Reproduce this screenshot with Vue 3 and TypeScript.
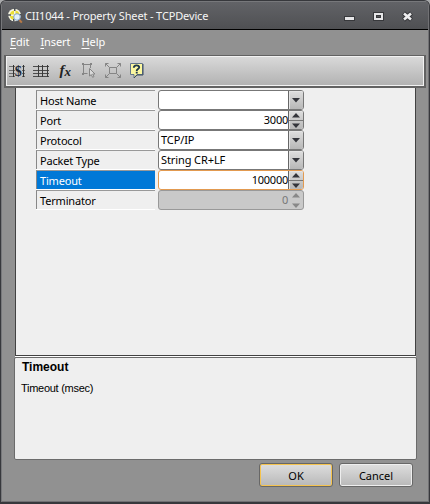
<script setup lang="ts">
interface PropertyRow {
  label: string
  value: string
  kind: 'combo' | 'spin'
  disabled?: boolean
}

const selected = 'Timeout'
const menus = ['Edit', 'Insert', 'Help']
const rows: PropertyRow[] = [
  { label: 'Host Name', value: '', kind: 'combo' },
  { label: 'Port', value: '3000', kind: 'spin' },
  { label: 'Protocol', value: 'TCP/IP', kind: 'combo' },
  { label: 'Packet Type', value: 'String CR+LF', kind: 'combo' },
  { label: 'Timeout', value: '100000', kind: 'spin' },
  { label: 'Terminator', value: '0', kind: 'spin', disabled: true },
]
</script>

<template>
  <div class="window">
    <header class="titlebar">
      <svg class="app-icon" width="16" height="16" viewBox="0 0 16 16">
        <circle cx="7.500" cy="7" r="6.300" fill="#f6f5e4" />
        <path d="M7 2.500A4.800 4.800 0 0 0 2.800 6.500H7zM8.500 2.500V6h4A4.800 4.800 0 0 0 8.500 2.500zM7 8v4a4.800 4.800 0 0 1-4.200-4z" fill="#eadf35" />
        <path d="M7 0h1.500v3H7zM1 6.300h3v1.500H1zM12 6h2.500v1.500H12zM6 11h1.500v2.500H6z" fill="#4c5157" />
        <circle cx="10" cy="9" r="3.300" fill="#e2f1fc" stroke="#86a5c8" stroke-width="1" />
        <path d="M12.500 12l2.300 2.600" stroke="#b87945" stroke-width="2" />
      </svg>
      <span class="title">CII1044 - Property Sheet - TCPDevice</span>
      <svg class="controls" width="72" height="12" viewBox="0 0 72 12" shape-rendering="crispEdges">
        <path d="M0 5h11v5H0z" fill="#38393c" />
        <path d="M1 6h9v3H1z" fill="#e6e6e8" />
        <path d="M29 1h11v9H29z" fill="#38393c" />
        <path d="M30 2h9v7h-9zM32 4v3h5V4z" fill="#e6e6e8" fill-rule="evenodd" />
        <path d="M33 5h3v1h-3z" fill="#55565a" />
        <path d="M59.500 2l8 7M67.500 2l-8 7" stroke="#38393c" stroke-width="4.500" shape-rendering="auto" />
        <path d="M60 2.500l7 6M67 2.500l-7 6" stroke="#eeeef0" stroke-width="2.600" shape-rendering="auto" />
      </svg>
    </header>

    <nav class="menu">
      <span v-for="m in menus" :key="m" class="menu-item"><u>{{ m[0] }}</u>{{ m.slice(1) }}</span>
    </nav>

    <div class="toolbar">
      <svg width="16" height="16" viewBox="0 0 16 16">
        <g shape-rendering="crispEdges">
          <path d="M0 3h16v1H0zM0 7h16v1H0zM0 10h16v1H0zM0 13h16v1H0z" fill="#6c6c6c" />
          <path d="M4 2h1v12H4zM14 2h1v12h-1z" fill="#333" />
          <path d="M6 3h7v11H6z" fill="#c4c4c4" />
        </g>
        <text x="5.800" y="13" class="dollar">$</text>
      </svg>
      <svg width="16" height="16" viewBox="0 0 16 16" shape-rendering="crispEdges">
        <path d="M0 3h16v1H0zM0 7h16v1H0zM0 10h16v1H0zM0 13h16v1H0z" fill="#4c4c4c" />
        <path d="M5 2h1v12H5zM9 2h1v12H9zM14 2h1v12h-1z" fill="#3a3a3a" />
      </svg>
      <svg width="16" height="16" viewBox="0 0 16 16">
        <text x="2.500" y="11.500" class="fx">f</text>
        <text x="7.500" y="13" class="fx small">x</text>
      </svg>
      <svg width="16" height="16" viewBox="0 0 16 16" fill="none" stroke="#858585">
        <path d="M9.500 5V1.500h-7v9h4" />
        <path d="M1 0h2v2H1zM9 0h2v2H9zM1 10h2v2H1z" fill="#858585" stroke="none" />
        <path d="M8.500 5.500v7.500l1.800-1.400 1.300 2.700 1.400-.7-1.300-2.600h2.300z" fill="#d9d9d9" />
      </svg>
      <svg width="16" height="16" viewBox="0 0 16 16" fill="none" stroke="#858585">
        <path d="M4.500 4.500h7v6h-7zM.5 3.500v-3h3M.5.5l4 4M12.500.5h3v3M15.500.5l-4 4M.5 11.500v3h3M.5 14.500l4-4M15.500 11.500v3h-3M15.500 14.500l-4-4" />
      </svg>
      <svg width="16" height="16" viewBox="0 0 16 16">
        <path d="M1.500.5h12v11H8L5 15v-3.500H1.500z" fill="#fbf7a0" stroke="#62758a" />
        <path d="M14 1v11H8l-3 3" fill="none" stroke="#3a4c60" />
        <path d="M4.800 4.800C4.800 1.700 10.200 1.700 10.200 4.300 10.200 6 7.700 6 7.700 7.900" fill="none" stroke="#20394b" stroke-width="1.900" />
        <path d="M6.800 8.800h1.900v1.700H6.800z" fill="#20394b" />
      </svg>
    </div>

    <main class="grid">
      <div v-for="r in rows" :key="r.label" class="row">
        <div class="label" :class="{ selected: r.label === selected }">{{ r.label }}</div>
        <div class="field" :class="[r.kind, { focus: r.label === selected, disabled: r.disabled }]">
          <span class="value">{{ r.value }}</span>
          <span v-if="r.kind === 'combo'" class="drop">
            <svg width="8" height="5" viewBox="0 0 8 5"><path d="M0 0h8L4 4.500z" /></svg>
          </span>
          <span v-else class="steps">
            <span><svg width="8" height="5" viewBox="0 0 8 5"><path d="M0 4.500h8L4 0z" /></svg></span>
            <span><svg width="8" height="5" viewBox="0 0 8 5"><path d="M0 .5h8L4 5z" /></svg></span>
          </span>
        </div>
      </div>
    </main>

    <section class="description">
      <h2>Timeout</h2>
      <p>Timeout (msec)</p>
    </section>

    <footer class="actions">
      <button class="default">OK</button>
      <button>Cancel</button>
    </footer>
  </div>
</template>

<style>
body {
  background: #a9aaac;
}
</style>

<style scoped>
* {
  box-sizing: border-box;
}
.window {
  width: 430px;
  height: 504px;
  border: 1px solid #37383c;
  border-bottom-width: 2px;
  border-radius: 6px 6px 0 0;
  background: #919191;
  box-shadow: inset 1px 1px #77787b, inset -1px -1px #717174;
  font-family: "Noto Sans", "Open Sans", sans-serif;
  font-size: 11px;
  color: #000;
  overflow: hidden;
}
.titlebar {
  height: 29px;
  margin: 0 1px;
  padding: 0 15px 0 5px;
  display: flex;
  align-items: center;
  background: linear-gradient(#626367, #4f5053);
  border-top: 1px solid #77787b;
  border-bottom: 1px solid #000;
}
.app-icon {
  flex: none;
  margin-top: 1px;
}
.title {
  flex: 1;
  margin-left: 2px;
  color: #f5f5f5;
  font-size: 11px;
  letter-spacing: -0.14px;
  white-space: nowrap;
}
.controls {
  flex: none;
  margin-right: -3px;
  margin-top: 2px;
}
.menu {
  height: 25px;
  padding: 4px 0 0 9px;
  display: flex;
  gap: 11px;
  color: #fff;
  line-height: 16px;
  letter-spacing: -0.08px;
}
.menu-item u {
  text-underline-offset: 2px;
}
.toolbar {
  height: 33px;
  width: 422px;
  margin-left: 3px;
  padding: 7px 0 0 3px;
  display: flex;
  gap: 8px;
  border: 2px solid #626262;
  border-top-width: 1px;
  background: linear-gradient(#dadada, #b1b1b1);
  box-shadow: inset 0 0 0 1px #f2f2f2;
}
.toolbar svg {
  flex: none;
  overflow: visible;
}
.dollar {
  font: bold 14px "Liberation Serif", serif;
  fill: #1d2936;
}
.fx {
  font: italic bold 15px "Liberation Serif", serif;
  fill: #222;
}
.fx.small {
  font-size: 13px;
}
.grid {
  width: 401px;
  height: 268px;
  margin-left: 14px;
  padding: 2px 0 0 20px;
  border: 1px solid #424242;
  border-top: 0;
  background: #efefef;
  box-shadow: 0 1px #fff;
}
.row {
  height: 20px;
  display: flex;
  gap: 3px;
}
.label {
  width: 119px;
  height: 19px;
  padding-left: 3px;
  border-left: 1px solid #888;
  border-top: 1px solid #999;
  box-shadow: 0 1px #fff;
  line-height: 20px;
  letter-spacing: -0.18px;
}
.label.selected {
  background: #0078d7;
  color: #fff;
}
.field {
  width: 146px;
  height: 20px;
  display: flex;
  border: 1px solid #777;
  border-radius: 3px;
  background: #fff;
  overflow: hidden;
}
.value {
  flex: 1;
  padding-left: 2px;
  line-height: 18px;
  letter-spacing: -0.1px;
}
.spin .value {
  text-align: right;
  letter-spacing: -0.25px;
}
.drop,
.steps {
  width: 15px;
  display: flex;
  border-left: 1px solid #666;
  background: linear-gradient(#dedede, #b7b7b7);
  box-shadow: inset 1px 1px #e4e4e4;
  fill: #34353b;
}
.drop {
  align-items: center;
  justify-content: center;
}
.steps {
  flex-direction: column;
}
.steps span {
  height: 9px;
  display: flex;
  align-items: center;
  justify-content: center;
}
.steps span + span {
  border-top: 1px solid #777;
}
.focus {
  border-color: #e29a50;
}
.disabled {
  border-color: #999;
  background: #c9c9c9;
  color: #777;
}
.disabled .steps {
  border-color: transparent;
  background: none;
  box-shadow: none;
  fill: #888;
}
.disabled .steps span + span {
  border-color: transparent;
}
.description {
  width: 403px;
  height: 103px;
  margin: 1px 0 0 13px;
  padding: 1px 6px;
  border: 1px solid #6b6b6b;
  border-radius: 2px;
  background: #efefef;
  font-family: "Liberation Sans", sans-serif;
  font-size: 11px;
}
.description h2 {
  margin: 0;
  padding-left: 1px;
  font-size: 12px;
  line-height: 16px;
}
.description p {
  margin: 6px 0 0;
  line-height: 15px;
  letter-spacing: -0.28px;
}
.actions {
  display: flex;
  gap: 6px;
  margin: 3px 0 0 258px;
}
button {
  width: 74px;
  height: 24px;
  padding: 0;
  border: 1px solid #676767;
  border-radius: 3px;
  background: linear-gradient(#dedede, #b8b8b8);
  box-shadow: inset 0 0 0 1px #eee;
  font: inherit;
  color: #000;
}
button.default {
  box-shadow: inset 0 0 0 1px #f5c34d;
}
</style>
